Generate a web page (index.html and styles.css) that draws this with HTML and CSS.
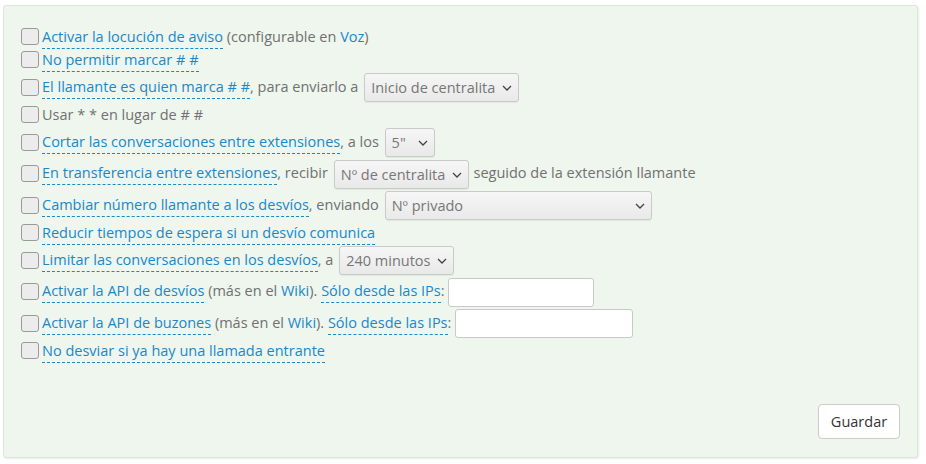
FILE: index.html
```html
<!DOCTYPE html>
<html lang="es">
<head>
  <meta charset="UTF-8">
  <meta name="viewport" content="width=device-width, initial-scale=1.0">
  <title>Opciones de desvíos</title>
  <link rel="stylesheet" href="styles.css">
</head>
<body>

  <!-- Options panel -->
  <form class="panel" action="#" method="POST">
    <div class="options">

      <div class="opt">
        <input type="checkbox">
        <span class="line"><span class="help">Activar la locución de aviso</span> (configurable en <a href="#">Voz</a>)</span>
      </div>

      <div class="opt">
        <input type="checkbox">
        <span class="line"><span class="help">No permitir marcar # #</span></span>
      </div>

      <div class="opt opt-ctl">
        <input type="checkbox">
        <span class="line"><span class="help">El llamante es quien marca # #</span>, para enviarlo a <span class="select"><select><option>Inicio de centralita</option></select><svg class="chev" viewBox="0 0 10 6"><path d="M1 1l4 4 4-4"/></svg></span></span>
      </div>

      <div class="opt">
        <input type="checkbox">
        <span class="line">Usar * * en lugar de # #</span>
      </div>

      <div class="opt opt-ctl">
        <input type="checkbox">
        <span class="line"><span class="help">Cortar las conversaciones entre extensiones</span>, a los <span class="select"><select class="sel-secs"><option>5"</option></select><svg class="chev" viewBox="0 0 10 6"><path d="M1 1l4 4 4-4"/></svg></span></span>
      </div>

      <div class="opt opt-ctl">
        <input type="checkbox">
        <span class="line"><span class="help">En transferencia entre extensiones</span>, recibir <span class="select"><select><option>Nº de centralita</option></select><svg class="chev" viewBox="0 0 10 6"><path d="M1 1l4 4 4-4"/></svg></span> seguido de la extensión llamante</span>
      </div>

      <div class="opt opt-ctl">
        <input type="checkbox">
        <span class="line"><span class="help">Cambiar número llamante a los desvíos</span>, enviando <span class="select"><select class="sel-wide"><option>Nº privado</option></select><svg class="chev" viewBox="0 0 10 6"><path d="M1 1l4 4 4-4"/></svg></span></span>
      </div>

      <div class="opt">
        <input type="checkbox">
        <span class="line"><span class="help">Reducir tiempos de espera si un desvío comunica</span></span>
      </div>

      <div class="opt opt-ctl">
        <input type="checkbox">
        <span class="line"><span class="help">Limitar las conversaciones en los desvíos</span>, a <span class="select"><select><option>240 minutos</option></select><svg class="chev" viewBox="0 0 10 6"><path d="M1 1l4 4 4-4"/></svg></span></span>
      </div>

      <div class="opt opt-ctl">
        <input type="checkbox">
        <span class="line"><span class="help">Activar la API de desvíos</span> (más en el <a href="#">Wiki</a>). <span class="help">Sólo desde las IPs</span>: <input type="text" class="ips"></span>
      </div>

      <div class="opt opt-ctl">
        <input type="checkbox">
        <span class="line"><span class="help">Activar la API de buzones</span> (más en el <a href="#">Wiki</a>). <span class="help">Sólo desde las IPs</span>: <input type="text" class="ips ips-long"></span>
      </div>

      <div class="opt">
        <input type="checkbox">
        <span class="line"><span class="help">No desviar si ya hay una llamada entrante</span></span>
      </div>

    </div>

    <div class="actions">
      <button type="submit">Guardar</button>
    </div>
  </form>

</body>
</html>
```

FILE: styles.css
```css
/* General Reset */
* {
  margin: 0;
  padding: 0;
  box-sizing: border-box;
}

body {
  font-family: 'Open Sans', 'DejaVu Sans', sans-serif;
  font-size: 14.5px;
  color: #717171;
  background-color: #fff;
  padding: 5px 8px 6px 3px;
}

a {
  color: #1a88cb;
  text-decoration: none;
}

/* Panel */
.panel {
  display: flex;
  flex-direction: column;
  height: 453px;
  padding: 19px 17px 18px 17px;
  background-color: #eef6ee;
  border: 1px solid #dbe7da;
  border-radius: 3px;
  box-shadow: 1px 1px 2px rgba(0, 0, 0, 0.08);
}

.options {
  display: flex;
  flex-direction: column;
  gap: 1.5px;
}

/* Option rows */
.opt {
  display: flex;
  align-items: center;
  height: 22px;
  white-space: nowrap;
}

.opt-ctl {
  height: 30px;
}

.opt input[type="checkbox"] {
  appearance: none;
  width: 18px;
  height: 17px;
  margin-right: 3px;
  border: 1px solid #9a9a9a;
  border-radius: 3px;
  background-color: #ececec;
  flex-shrink: 0;
}

.line {
  line-height: 22px;
  padding-top: 1px;
}

.help {
  color: #1a88cb;
  border-bottom: 1px dashed #1a88cb;
  padding-bottom: 2px;
}

/* Selects */
.select {
  position: relative;
  display: inline-block;
  vertical-align: middle;
  margin: -4px 1px -3px 2px;
}

.select select {
  appearance: none;
  display: block;
  height: 29px;
  padding: 0 22px 0 6px;
  font-family: inherit;
  font-size: 14.5px;
  color: #777;
  background: linear-gradient(#f6f6f6, #e9e9e9);
  border: 1px solid #cacaca;
  border-radius: 3px;
  box-shadow: 0 1px 1px rgba(0, 0, 0, 0.06);
}

.select .sel-secs {
  width: 50px;
}

.select .sel-wide {
  width: 267px;
}

.select .chev {
  position: absolute;
  right: 7px;
  top: 12px;
  width: 10px;
  height: 6px;
  fill: none;
  stroke: #444;
  stroke-width: 1.3;
  pointer-events: none;
}

/* IP inputs */
.ips {
  display: inline-block;
  vertical-align: middle;
  width: 146px;
  height: 29px;
  margin: -4px 0 -3px 0;
  background-color: #fff;
  border: 1px solid #c9c9c9;
  border-radius: 3px;
}

.ips-long {
  width: 178px;
}

/* Footer */
.actions {
  margin-top: auto;
  display: flex;
  justify-content: flex-end;
}

.actions button {
  width: 82px;
  height: 35px;
  font-family: inherit;
  font-size: 14.5px;
  color: #333;
  background-color: #fff;
  border: 1px solid #cccccc;
  border-radius: 4px;
  cursor: pointer;
}
```
